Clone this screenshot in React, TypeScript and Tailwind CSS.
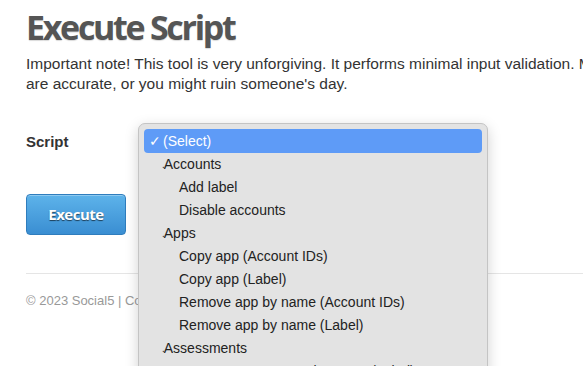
import React from 'react';

const groups: { label: string; items: string[] }[] = [
  { label: 'Accounts', items: ['Add label', 'Disable accounts'] },
  {
    label: 'Apps',
    items: [
      'Copy app (Account IDs)',
      'Copy app (Label)',
      'Remove app by name (Account IDs)',
      'Remove app by name (Label)',
    ],
  },
  { label: 'Assessments', items: ['Remove assessment by name (Label)'] },
];

const App: React.FC = () => {
  return (
    <div className="relative w-[583px] h-[366px] overflow-hidden bg-white font-['Liberation_Sans',Arial,sans-serif]">
      <div className="w-[800px] px-[26px] pt-[6px]">
        <h1 className="font-['Open_Sans',sans-serif] font-bold text-[34px] leading-[42px] tracking-[-2.3px] text-[#555] [text-shadow:0_1px_1px_rgba(0,0,0,0.15)]">
          Execute Script
        </h1>

        <p className="mt-[6px] text-[15.5px] leading-[20px] text-[#333] whitespace-nowrap">
          Important note! This tool is very unforgiving. It performs minimal input validation. Make sure your inputs
          <br />
          are accurate, or you might ruin someone's day.
        </p>

        <div className="mt-[36px] flex items-center h-[24px]">
          <label className="w-[112px] text-[15px] font-bold text-[#333]">Script</label>
          <div className="h-[24px] w-[200px] rounded border border-[#ccc]" />
        </div>

        <button className="mt-[40px] w-[100px] h-[41px] rounded-[4px] border border-[#2f7dbd] bg-gradient-to-b from-[#5db3ea] to-[#3a8ed2] text-white text-[15px] font-bold font-['Open_Sans',sans-serif] tracking-[-0.5px] [text-shadow:0_1px_1px_rgba(0,0,0,0.6)] shadow-[inset_0_1px_0_rgba(255,255,255,0.3)]">
          Execute
        </button>

        <div className="mt-[38px] border-t border-[#e5e5e5]" />
        <p className="mt-[17px] text-[13px] text-[#999]">© 2023 Social5 | Contact us</p>
      </div>

      {/* open native select menu */}
      <div className="absolute left-[138px] top-[123px] w-[350px] h-[280px] rounded-[7px] border border-[#c4c4c4] bg-[#e3e3e3] shadow-[0_4px_14px_rgba(0,0,0,0.18)] px-[5px] pt-[5px] text-[14px] text-[#222]">
        <div className="flex items-center h-[24px] rounded-[4px] bg-[#5e9bf7] text-white">
          <span className="w-[19px] pl-[5px] text-[14px]">✓</span>
          <span>(Select)</span>
        </div>
        {groups.map((g) => (
          <div key={g.label}>
            <div className="flex items-center h-[23px] pl-[18px]">
              <span className="text-[10px] -mr-[1px]">.</span>
              {g.label}
            </div>
            {g.items.map((it) => (
              <div key={it} className="flex items-center h-[23px] pl-[35px]">
                {it}
              </div>
            ))}
          </div>
        ))}
      </div>
    </div>
  );
};

export default App;
